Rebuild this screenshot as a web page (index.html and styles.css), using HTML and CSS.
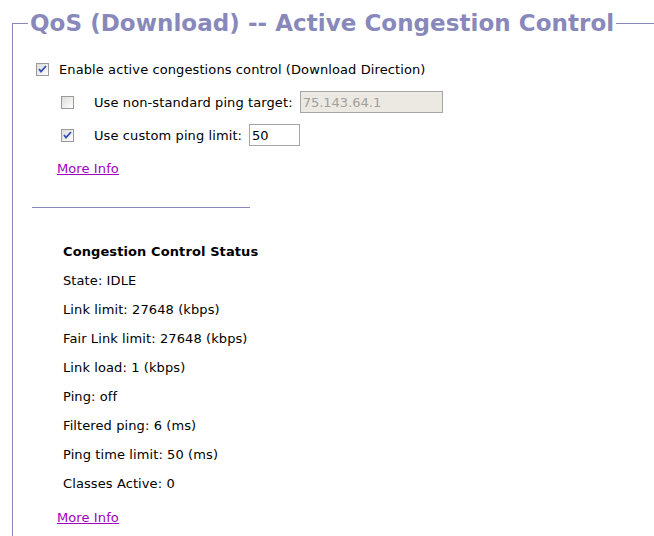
FILE: index.html
```html
<!DOCTYPE html>
<html>

<head>
  <meta charset="utf-8">
  <title>QoS Download - Active Congestion Control</title>
  <link rel="stylesheet" href="styles.css">
</head>

<body>
  <fieldset class="section">
    <legend class="sectionheader">QoS (Download) -- Active Congestion Control</legend>

    <div class="option">
      <input type="checkbox" id="qos_monenabled" checked>
      <label for="qos_monenabled">Enable active congestions control (Download Direction)</label>
    </div>

    <div class="option indent">
      <input type="checkbox" id="use_ptarget_ip">
      <label for="use_ptarget_ip">Use non-standard ping target:</label>
      <input type="text" class="textbox wide" id="ptarget_ip" value="75.143.64.1" disabled>
    </div>

    <div class="option indent">
      <input type="checkbox" id="use_auto_pinglimit" checked>
      <label for="use_auto_pinglimit">Use custom ping limit:</label>
      <input type="text" class="textbox short" id="pinglimit" value="50">
    </div>

    <a class="moreinfo" href="#">More Info</a>

    <hr class="divider">

    <div class="status">
      <div class="statusheader">Congestion Control Status</div>
      <div>State: IDLE</div>
      <div>Link limit: 27648 (kbps)</div>
      <div>Fair Link limit: 27648 (kbps)</div>
      <div>Link load: 1 (kbps)</div>
      <div>Ping: off</div>
      <div>Filtered ping: 6 (ms)</div>
      <div>Ping time limit: 50 (ms)</div>
      <div>Classes Active: 0</div>
    </div>

    <a class="moreinfo" href="#">More Info</a>
  </fieldset>
</body>
</html>
```

FILE: styles.css
```css
html {
  background-color: #ffffff;
}

body {
  font-family: "DejaVu Sans", Verdana, sans-serif;
  font-size: 13px;
  letter-spacing: 0.1px;
  color: #000000;
  margin: 0;
  padding: 0;
  overflow: hidden;
}

.section {
  width: 618px;
  margin: 8px 0 0 12px;
  padding: 0 0 10px 23px;
  border: none;
  border-top: 1px solid #8888bb;
  border-left: 1px solid #8888bb;
  display: flex;
  flex-direction: column;
  align-items: flex-start;
}

.sectionheader {
  font-size: 23px;
  font-weight: bold;
  letter-spacing: 0.05px;
  color: #8888bb;
  padding: 0 2px;
  margin-left: -8px;
  line-height: 30px;
}

.option {
  display: flex;
  align-items: center;
  height: 22px;
  margin-top: 20px;
}

.option input[type="checkbox"] {
  margin: 0 10px 0 0;
}

.indent {
  margin-left: 25px;
  margin-top: 11px;
}

.indent input[type="checkbox"] {
  margin-right: 20px;
}

input[type="checkbox"] {
  appearance: none;
  width: 13px;
  height: 13px;
  border: 1px solid #9a9a9a;
  background: linear-gradient(135deg, #dcdcd7, #ffffff);
  flex: none;
}

input[type="checkbox"]:checked {
  background: url("data:image/svg+xml,%3Csvg xmlns='http://www.w3.org/2000/svg' viewBox='0 0 11 11'%3E%3Cpath d='M2 5l2 2.5L9 2' fill='none' stroke='%23324fb8' stroke-width='1.8'/%3E%3C/svg%3E") center / 11px 11px no-repeat, linear-gradient(135deg, #dcdcd7, #ffffff);
}

.textbox {
  font-family: "DejaVu Sans", Verdana, sans-serif;
  font-size: 13px;
  height: 22px;
  box-sizing: border-box;
  border: 1px solid #a5a5a5;
  padding: 0 2px;
  margin-left: 7px;
  color: #000000;
  background-color: #ffffff;
}

.textbox.wide {
  width: 143px;
}

.textbox.short {
  width: 51px;
}

.textbox:disabled {
  background-color: #ebe9e1;
  color: #a0a0a0;
}

.moreinfo {
  color: #a000c0;
  margin: 15px 0 0 21px;
  line-height: 16px;
}

.divider {
  width: 218px;
  margin: 30px 0 0 -4px;
  border: none;
  border-top: 1px solid #8888bb;
}

.status {
  margin: 36px 0 0 27px;
  display: flex;
  flex-direction: column;
  gap: 13px;
  line-height: 16px;
}

.statusheader {
  font-weight: bold;
}

.status + .moreinfo {
  margin-top: 18px;
}
```
